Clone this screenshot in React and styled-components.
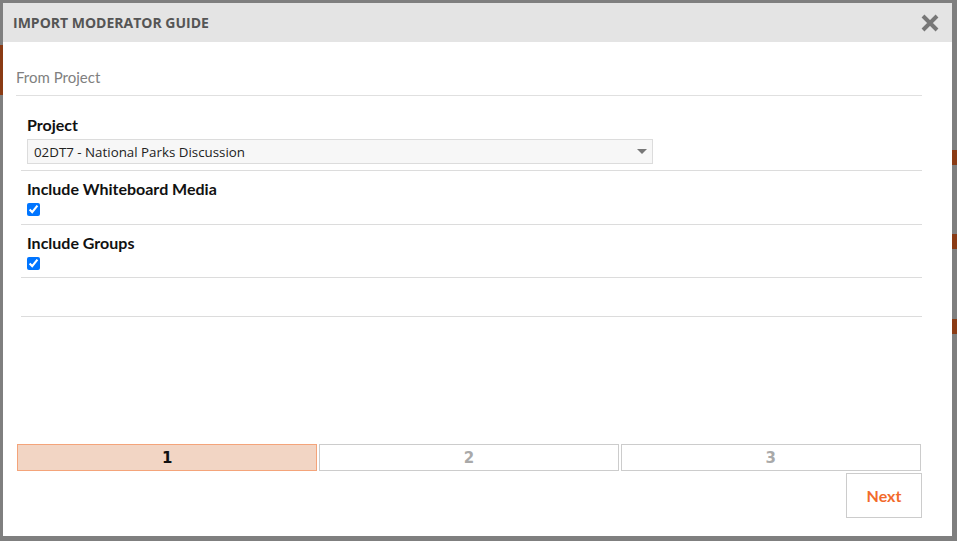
import React from "react";
import styled, { createGlobalStyle } from "styled-components";

const Global = createGlobalStyle`
  html, body { margin: 0; padding: 0; }
  body { width: 957px; height: 541px; overflow: hidden; background: #808080; font-family: Lato, "Open Sans", sans-serif; }
`;

const Backdrop = styled.div`
  position: relative;
  width: 957px;
  height: 541px;
  background: #7f7f7f;
  overflow: hidden;
`;

const Stripe = styled.div`
  position: absolute;
  background: #8a3b14;
`;

const Modal = styled.div`
  position: absolute;
  left: 3px;
  top: 3px;
  width: 949px;
  height: 533px;
  background: #fff;
  display: flex;
  flex-direction: column;
`;

const Header = styled.div`
  height: 39px;
  background: #e4e4e4;
  display: flex;
  align-items: center;
  justify-content: space-between;
  padding: 0 11px 0 10px;
  flex-shrink: 0;
`;

const Title = styled.h1`
  margin: 0;
  font-family: "Open Sans", sans-serif;
  font-weight: 700;
  font-size: 14px;
  color: #555;
`;

const CloseBtn = styled.button`
  border: 0;
  background: none;
  padding: 0;
  width: 22px;
  height: 22px;
  display: flex;
  align-items: center;
  justify-content: center;
  cursor: pointer;
`;

const Body = styled.div`
  flex: 1;
  display: flex;
  flex-direction: column;
  padding: 0 30px 18px 13px;
`;

const SectionTitle = styled.div`
  font-size: 15px;
  line-height: 20px;
  color: #808080;
  padding: 25px 0 8px 0;
  border-bottom: 1px solid #e0e0e0;
`;

const Form = styled.div`
  padding-left: 5px;
`;

const Row = styled.div`
  display: flex;
  flex-direction: column;
  align-items: flex-start;
  padding: ${(p) => p.$top ?? 8}px 6px ${(p) => p.$bottom ?? 8}px;
  min-height: ${(p) => p.$min || 0}px;
  border-bottom: 1px solid #dcdcdc;
  box-sizing: border-box;
`;

const Label = styled.label`
  font-family: Lato, sans-serif;
  font-weight: 700;
  font-size: 16px;
  line-height: 20px;
  color: #111;
`;

const Select = styled.div`
  margin-top: 4px;
  width: 626px;
  height: 25px;
  box-sizing: border-box;
  border: 1px solid #dcdcdc;
  background: #f7f7f7;
  display: flex;
  align-items: center;
  justify-content: space-between;
  padding: 0 5px 0 6px;
  font-family: "Open Sans", sans-serif;
  font-size: 13.33px;
  color: #222;
`;

const Check = styled.input`
  margin: 4px 0 0 0;
  width: 13px;
  height: 13px;
  accent-color: #0075ff;
`;

const Spacer = styled.div`
  flex: 1;
`;

const Steps = styled.div`
  display: grid;
  grid-template-columns: repeat(3, 1fr);
  column-gap: 1.5px;
  width: 904px;
  margin-left: 1px;
`;

const Step = styled.div`
  height: 27px;
  box-sizing: border-box;
  border: 1px solid ${(p) => (p.$active ? "#f4a47a" : "#cccccc")};
  background: ${(p) => (p.$active ? "#f2d5c4" : "#fff")};
  color: ${(p) => (p.$active ? "#111" : "#a9a9a9")};
  font-family: "DejaVu Sans", Verdana, sans-serif;
  font-weight: 700;
  font-size: 15px;
  display: flex;
  align-items: center;
  justify-content: center;
`;

const Footer = styled.div`
  display: flex;
  justify-content: flex-end;
  margin-top: 2px;
`;

const NextBtn = styled.button`
  width: 76px;
  height: 45px;
  box-sizing: border-box;
  border: 1px solid #cccccc;
  background: #fff;
  color: #f26a2b;
  font-family: Lato, sans-serif;
  font-weight: 700;
  font-size: 16px;
  cursor: pointer;
  padding: 0;
`;

export default function App() {
  return (
    <>
      <Global />
      <Backdrop>
        <Stripe style={{ left: 0, top: 45, width: 3, height: 50 }} />
        <Stripe style={{ right: 0, top: 150, width: 5, height: 15 }} />
        <Stripe style={{ right: 0, top: 234, width: 5, height: 15 }} />
        <Stripe style={{ right: 0, top: 319, width: 5, height: 15 }} />
        <Modal>
          <Header>
            <Title>IMPORT MODERATOR GUIDE</Title>
            <CloseBtn aria-label="Close">
              <svg width="20" height="20" viewBox="0 0 20 20">
                <path d="M3 3 L17 17 M17 3 L3 17" stroke="#777" strokeWidth="4" strokeLinecap="butt" />
              </svg>
            </CloseBtn>
          </Header>
          <Body>
            <SectionTitle>From Project</SectionTitle>
            <Form>
              <Row $top={19} $bottom={6}>
                <Label>Project</Label>
                <Select>
                  <span>02DT7 - National Parks Discussion</span>
                  <svg width="10" height="6" viewBox="0 0 10 6">
                    <path d="M0 0 H10 L5 5 Z" fill="#777" />
                  </svg>
                </Select>
              </Row>
              <Row $top={8} $bottom={8}>
                <Label>Include Whiteboard Media</Label>
                <Check type="checkbox" defaultChecked />
              </Row>
              <Row $top={8} $bottom={7}>
                <Label>Include Groups</Label>
                <Check type="checkbox" defaultChecked />
              </Row>
              <Row $min={39} />
            </Form>
            <Spacer />
            <Steps>
              <Step $active>1</Step>
              <Step>2</Step>
              <Step>3</Step>
            </Steps>
            <Footer>
              <NextBtn>Next</NextBtn>
            </Footer>
          </Body>
        </Modal>
      </Backdrop>
    </>
  );
}
